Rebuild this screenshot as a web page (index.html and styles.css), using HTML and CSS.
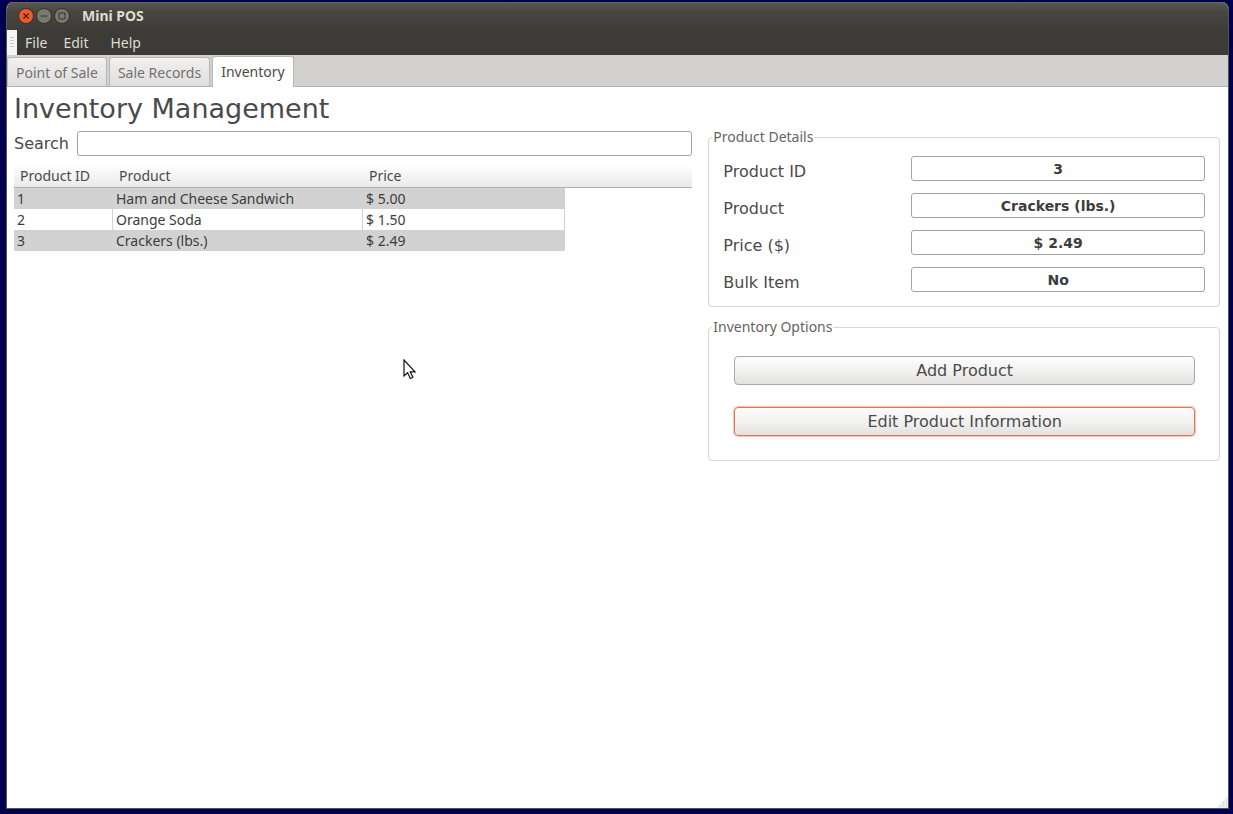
FILE: index.html
```
<!DOCTYPE html>
<html lang="en">
<head>
  <meta charset="UTF-8" />
  <meta name="viewport" content="width=device-width, initial-scale=1.0"/>
  <title>Mini POS</title>
  <link rel="stylesheet" href="styles.css">
</head>
<body>

  <div class="window">
    <header class="title-bar">
      <div class="window-buttons">
        <button type="button" aria-label="Close">
          <svg width="16" height="16" viewBox="0 0 16 16">
            <circle cx="8" cy="8" r="7.5" fill="#f0592a" stroke="#33302b"/>
            <path d="M5.5 5.5l5 5M10.5 5.5l-5 5" stroke="#4a2015" stroke-width="1.3" fill="none"/>
          </svg>
        </button>
        <button type="button" aria-label="Minimize">
          <svg width="16" height="16" viewBox="0 0 16 16">
            <circle cx="8" cy="8" r="7.5" fill="#7b7871" stroke="#33302b"/>
            <path d="M4.500 8h7" stroke="#35332e" stroke-width="1" fill="none"/>
          </svg>
        </button>
        <button type="button" aria-label="Maximize">
          <svg width="16" height="16" viewBox="0 0 16 16">
            <circle cx="8" cy="8" r="7.5" fill="#7b7871" stroke="#33302b"/>
            <path d="M5 5h6v6h-6z" stroke="#35332e" stroke-width="1" fill="none"/>
          </svg>
        </button>
      </div>
      <span class="title">Mini POS</span>
    </header>

    <nav class="menu-bar">
      <span class="handle"></span>
      <button type="button">File</button>
      <button type="button">Edit</button>
      <button type="button" class="help">Help</button>
    </nav>

    <div class="tabs" role="tablist">
      <button type="button" role="tab" class="tab">Point of Sale</button>
      <button type="button" role="tab" class="tab">Sale Records</button>
      <button type="button" role="tab" class="tab active" aria-selected="true">Inventory</button>
    </div>

    <main>
      <h1>Inventory Management</h1>

      <div class="columns">
        <section class="products">
          <div class="search">
            <label for="search">Search</label>
            <input type="text" id="search">
          </div>

          <table>
            <colgroup>
              <col class="col-id">
              <col class="col-product">
              <col class="col-price">
              <col>
            </colgroup>
            <thead>
              <tr><th>Product ID</th><th>Product</th><th>Price</th><th></th></tr>
            </thead>
            <tbody>
              <tr><td>1</td><td>Ham and Cheese Sandwich</td><td>$ 5.00</td></tr>
              <tr><td>2</td><td>Orange Soda</td><td>$ 1.50</td></tr>
              <tr><td>3</td><td>Crackers (lbs.)</td><td>$ 2.49</td></tr>
            </tbody>
          </table>
        </section>

        <section class="sidebar">
          <fieldset>
            <legend>Product Details</legend>
            <div class="details">
              <label for="productId">Product ID</label>
              <input type="text" id="productId" value="3" readonly>
              <label for="product">Product</label>
              <input type="text" id="product" value="Crackers (lbs.)" readonly>
              <label for="price">Price ($)</label>
              <input type="text" id="price" value="$ 2.49" readonly>
              <label for="bulk">Bulk Item</label>
              <input type="text" id="bulk" value="No" readonly>
            </div>
          </fieldset>

          <fieldset>
            <legend>Inventory Options</legend>
            <div class="options">
              <button type="button">Add Product</button>
              <button type="button" class="focused">Edit Product Information</button>
            </div>
          </fieldset>
        </section>
      </div>
    </main>

    <svg class="grip" width="12" height="12" viewBox="0 0 12 12">
      <path d="M12 0v12H0z" fill="#efefec"/>
      <path d="M10 4h1M7 7h1M10 7h1M4 10h1M7 10h1M10 10h1" stroke="#c2c2bd"/>
    </svg>
  </div>

  <!-- Mouse pointer -->
  <svg class="pointer" width="13" height="21" viewBox="0 0 13 21">
    <path d="M1 1v16l3.600-3.300 2.800 5.800 2.500-1.200-2.700-5.500H12z" fill="#fff" stroke="#111" stroke-width="1.200"/>
  </svg>

</body>
</html>
```
FILE: styles.css
```
* {
  box-sizing: border-box;
}

body {
  margin: 0;
  padding: 2px 4px 5px 6px;
  height: 100vh;
  background: #00004f;
  color: #4a4a4a;
  font-family: "DejaVu Sans", sans-serif;
  font-size: 16px;
}

button,
input {
  font: inherit;
  color: inherit;
}

.window {
  position: relative;
  display: flex;
  flex-direction: column;
  height: 100%;
  background: #fff;
  border: 1px solid #55564f;
  border-top: none;
  border-radius: 7px 7px 0 0;
  overflow: hidden;
}

/* Title bar and menu */
.title-bar {
  display: flex;
  align-items: center;
  gap: 12px;
  height: 28px;
  padding: 0 11px 2px;
  background: linear-gradient(#5a5951, #47463f 30%, #3e3d38);
  border-top: 1px solid #65645c;
  color: #dfdbd2;
}

.window-buttons {
  display: flex;
  gap: 2px;
}

.window-buttons button {
  display: flex;
  padding: 0;
  border: none;
  background: none;
}

.title {
  font-family: "Noto Sans", sans-serif;
  font-size: 14px;
  font-weight: bold;
}

.menu-bar {
  display: flex;
  height: 25px;
  background: #3c3b37;
  font-family: "Noto Sans", sans-serif;
  font-size: 14px;
}

.menu-bar button {
  padding: 0 8px;
  border: none;
  background: none;
  color: #dfdbd2;
}

.menu-bar .help {
  margin-left: 6px;
}

.handle {
  width: 10px;
  padding: 7px 3px;
  background: #f5f5f4;
}

.handle::before {
  content: "";
  display: block;
  height: 11px;
  background: repeating-linear-gradient(#ccc 0 1px, transparent 1px 3px);
}

/* Tabs */
.tabs {
  display: flex;
  align-items: flex-end;
  gap: 2px;
  height: 32px;
  background: #d2d1d0;
  border-bottom: 1px solid #b4b3b1;
  font-family: "Noto Sans", sans-serif;
  font-size: 14px;
}

.tab {
  height: 29px;
  padding: 0 8px;
  background: linear-gradient(#f1f0ef, #dfdedd);
  border: 1px solid #bab8b6;
  border-bottom: none;
  border-radius: 3px 3px 0 0;
  color: #727272;
}

.tab.active {
  height: 31px;
  margin-bottom: -1px;
  padding-bottom: 2px;
  background: #fff;
  color: #4a4a4a;
}

main {
  flex: 1;
  padding: 4px 8px 8px 7px;
}

h1 {
  margin: 0;
  font-size: 27px;
  font-weight: normal;
  line-height: 36px;
}

.columns {
  display: grid;
  grid-template-columns: 57fr 43fr;
  gap: 16px;
}

.search {
  display: flex;
  align-items: center;
  gap: 8px;
  margin-top: 4px;
}

input {
  flex: 1;
  min-width: 0;
  height: 25px;
  padding: 0 6px;
  background: #fff;
  border: 1px solid #a3a2a1;
  border-radius: 3px;
}

/* Product table */
table {
  width: 100%;
  margin-top: 8px;
  table-layout: fixed;
  border-collapse: separate;
  border-spacing: 0;
  font-family: "Noto Sans", sans-serif;
  font-size: 14px;
  line-height: 20px;
}

.col-id {
  width: 99px;
}

.col-product {
  width: 250px;
}

.col-price {
  width: 202px;
}

thead tr {
  background: linear-gradient(#fff, #e9e9e8);
}

th {
  height: 24px;
  padding: 1px 6px 0;
  border-bottom: 1px solid #b0afa9;
  font-weight: normal;
  text-align: left;
}

td {
  height: 21px;
  padding: 0 3px;
  border-right: 1px solid #d2d2d2;
  color: #3c3c3c;
  white-space: nowrap;
}

tbody tr:nth-child(odd) td {
  background: #d2d2d2;
}

/* Right side panels */
.sidebar {
  display: flex;
  flex-direction: column;
  gap: 11px;
  padding-top: 1px;
}

fieldset {
  min-width: 0;
  margin: 0;
  padding: 0;
  border: 1px solid #d6d6d6;
  border-radius: 4px;
}

legend {
  margin-left: 3px;
  padding: 0 1px;
  font-family: "Noto Sans", sans-serif;
  font-size: 14px;
  line-height: 18px;
  color: #646464;
}

.details {
  display: grid;
  grid-template-columns: 188px 1fr;
  align-items: start;
  row-gap: 10px;
  padding: 10px 14px 12px;
}

.details label {
  padding-top: 5px;
  line-height: 22px;
}

.details input {
  font-size: 14px;
  font-weight: bold;
  text-align: center;
  color: #3c3c3c;
}

.options {
  display: flex;
  flex-direction: column;
  gap: 22px;
  padding: 20px 24px 24px 25px;
}

.options button {
  height: 29px;
  padding: 0;
  background: linear-gradient(#fdfdfd, #f2f2f1 50%, #e2e1e0);
  border: 1px solid #aaa9a8;
  border-radius: 4px;
}

.options .focused {
  border-color: #d9775a;
  box-shadow: 0 0 1px 1px #f6c5b0;
}

.grip {
  position: absolute;
  right: 0;
  bottom: 0;
}

.pointer {
  position: absolute;
  left: 403px;
  top: 359px;
}
```
